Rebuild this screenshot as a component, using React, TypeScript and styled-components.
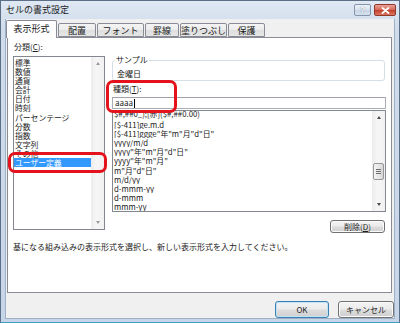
import React from 'react';
import styled, { createGlobalStyle } from 'styled-components';

const GlobalStyle = createGlobalStyle`
  html, body {
    margin: 0;
    padding: 0;
    background: #ffffff;
  }
  body {
    font-family: "Noto Sans CJK JP", "Noto Sans", sans-serif;
    color: #1a1a1a;
  }
  * {
    box-sizing: border-box;
  }
`;

const Window = styled.div`
  width: 400px;
  height: 323px;
  display: flex;
  flex-direction: column;
  background: linear-gradient(180deg, #dfe8f3 0px, #cfdcec 30px, #c6d5e8 100%);
  border: 1px solid #5d6f86;
  border-bottom-color: #3d9cc0;
`;

const TitleBar = styled.div`
  height: 18px;
  flex: none;
  display: flex;
  align-items: center;
  justify-content: space-between;
  padding: 0 3px 0 5px;
`;

const Title = styled.span`
  font-size: 9px;
  line-height: 12px;
  color: #1c1c1c;
`;

const Controls = styled.div`
  align-self: flex-start;
  margin-top: 3px;
  display: flex;
  gap: 3px;
`;

const CaptionButton = styled.div<{ $close?: boolean }>`
  width: ${(p) => (p.$close ? 22 : 17)}px;
  height: 12px;
  border-radius: 2px;
  display: flex;
  align-items: center;
  justify-content: center;
  border: 1px solid ${(p) => (p.$close ? '#92362b' : '#8495ab')};
  background: ${(p) =>
    p.$close
      ? 'linear-gradient(180deg, #eaa497 0%, #d86b5c 45%, #c4422f 55%, #d9785f 100%)'
      : 'linear-gradient(180deg, #eef3f9 0%, #d9e3ef 45%, #c9d6e6 55%, #d6e1ee 100%)'};
  color: #ffffff;
  font-family: "Liberation Sans", sans-serif;
  font-weight: bold;
  font-size: 9px;
  line-height: 10px;
  text-shadow: 0 0 1px #4b5a70;
`;

const Client = styled.div`
  flex: 1;
  margin: 0 4px 3px;
  background: #f0f0f0;
  border-left: 1px solid #9fb0c6;
  border-right: 1px solid #9fb0c6;
  border-bottom: 1px solid #9fb0c6;
  display: flex;
  flex-direction: column;
`;

const TabRow = styled.div`
  height: 18px;
  flex: none;
  display: flex;
  align-items: flex-end;
  position: relative;
  z-index: 2;
`;

const Tab = styled.div<{ $active?: boolean; $w: number }>`
  width: ${(p) => p.$w}px;
  height: ${(p) => (p.$active ? 18 : 14)}px;
  margin-left: ${(p) => (p.$active ? 0 : 1)}px;
  margin-bottom: ${(p) => (p.$active ? -1 : 0)}px;
  border: 1px solid #898c95;
  border-bottom: ${(p) => (p.$active ? 'none' : '1px solid #898c95')};
  border-radius: 2px 2px 0 0;
  background: ${(p) =>
    p.$active ? '#ffffff' : 'linear-gradient(180deg, #f4f4f4 0%, #ececec 50%, #dedede 51%, #e6e6e6 100%)'};
  display: flex;
  align-items: center;
  justify-content: center;
  font-size: 9px;
  line-height: 11px;
  white-space: nowrap;
  color: #1a1a1a;
  padding-bottom: ${(p) => (p.$active ? 2 : 0)}px;
`;

const Panel = styled.div`
  position: relative;
  height: 256px;
  flex: none;
  margin: 0 2px 0 1px;
  border: 1px solid #898c95;
  background: #ffffff;
  padding: 4px 5px 0;
  display: flex;
  flex-direction: column;
`;

const TopRow = styled.div`
  display: flex;
  gap: 7px;
`;

const LeftColumn = styled.div`
  width: 92px;
  display: flex;
  flex-direction: column;
  gap: 4px;
`;

const RightColumn = styled.div`
  flex: 1;
  padding-top: 13px;
  display: flex;
  flex-direction: column;
`;

const Label = styled.div`
  font-size: 8px;
  line-height: 10px;
  height: 10px;
  padding-left: 1px;
  white-space: nowrap;
  u {
    text-decoration: underline;
  }
`;

const ListBox = styled.div<{ $h: number }>`
  height: ${(p) => p.$h}px;
  flex: none;
  border: 1px solid #828790;
  background: #ffffff;
  display: flex;
  overflow: hidden;
`;

const Items = styled.div<{ $top: number }>`
  flex: 1;
  min-width: 0;
  padding-top: ${(p) => p.$top}px;
  overflow: hidden;
`;

const Item = styled.div<{ $selected?: boolean; $partial?: boolean }>`
  height: 9.1px;
  line-height: ${(p) => (p.$partial ? 6 : 9.1)}px;
  font-size: 7.8px;
  padding-left: 1px;
  white-space: nowrap;
  overflow: hidden;
  color: ${(p) => (p.$selected ? '#ffffff' : '#1a1a1a')};
  background: ${(p) => (p.$selected ? '#3399ff' : 'transparent')};
`;

const ScrollBar = styled.div`
  width: 13px;
  flex: none;
  background: linear-gradient(90deg, #ececec 0%, #f6f6f6 40%, #f1f1f1 100%);
  display: flex;
  flex-direction: column;
  align-items: center;
`;

const ArrowBox = styled.div`
  height: 13px;
  width: 100%;
  flex: none;
  display: flex;
  align-items: center;
  justify-content: center;
`;

const Arrow = styled.div<{ $down?: boolean; $dim?: boolean }>`
  width: 0;
  height: 0;
  border-left: 2.5px solid transparent;
  border-right: 2.5px solid transparent;
  ${(p) => (p.$down ? 'border-top' : 'border-bottom')}: 3px solid ${(p) => (p.$dim ? '#9a9a9a' : '#4a4a4a')};
`;

const Track = styled.div<{ $offset: number }>`
  flex: 1;
  width: 100%;
  padding: ${(p) => p.$offset}px 1px 0;
`;

const Thumb = styled.div`
  height: 17px;
  border: 1px solid #979797;
  border-radius: 2px;
  background: linear-gradient(90deg, #f3f3f3 0%, #e8e8e8 50%, #d6d6d6 100%);
  display: flex;
  flex-direction: column;
  align-items: center;
  justify-content: center;
  gap: 1px;
`;

const Grip = styled.div`
  width: 5px;
  height: 1px;
  background: #6f6f6f;
`;

const SampleBox = styled.fieldset`
  margin: 0 1px 0 0;
  padding: 4px 4px 1px;
  border: 1px solid #d5dfe5;
  border-radius: 3px;
  min-width: 0;
`;

const Legend = styled.legend`
  font-size: 8px;
  line-height: 10px;
  padding: 0 1px;
  margin-left: -2px;
`;

const SampleText = styled.div`
  font-size: 8px;
  line-height: 10px;
  height: 10px;
`;

const TypeLabel = styled(Label)`
  margin-top: 3px;
`;

const TextBox = styled.div`
  margin-top: 3px;
  height: 12px;
  border: 1px solid #abadb3;
  border-top-color: #9fa2aa;
  background: #ffffff;
  padding-left: 2px;
  font-size: 8px;
  line-height: 10px;
  display: flex;
  align-items: center;
`;

const Caret = styled.span`
  display: inline-block;
  width: 1px;
  height: 9px;
  background: #000000;
  margin-left: 1px;
`;

const FormatList = styled(ListBox)`
  margin-top: 1px;
`;

const Button = styled.div<{ $w: number; $h: number; $default?: boolean }>`
  width: ${(p) => p.$w}px;
  height: ${(p) => p.$h}px;
  flex: none;
  border: 1px solid ${(p) => (p.$default ? '#3c7fb1' : '#707070')};
  border-radius: 3px;
  background: linear-gradient(180deg, #f3f3f3 0%, #ebebeb 48%, #dddddd 52%, #cfcfcf 100%);
  box-shadow: ${(p) => (p.$default ? 'inset 0 0 0 1px #bfe3f8' : 'inset 0 0 0 1px #fbfbfb')};
  display: flex;
  align-items: center;
  justify-content: center;
  font-size: 8px;
  line-height: 10px;
  color: #1f1f1f;
  u {
    text-decoration: underline;
  }
`;

const DeleteButton = styled(Button)`
  margin-top: 8px;
  align-self: flex-end;
  margin-right: 1px;
`;

const Description = styled.div`
  margin-top: 9px;
  font-size: 8px;
  line-height: 10px;
  white-space: nowrap;
`;

const ButtonRow = styled.div`
  margin-top: 8px;
  display: flex;
  justify-content: flex-end;
  gap: 9px;
`;

const Mark = styled.div<{ $x: number; $y: number; $w: number; $h: number }>`
  position: absolute;
  left: ${(p) => p.$x}px;
  top: ${(p) => p.$y}px;
  width: ${(p) => p.$w}px;
  height: ${(p) => p.$h}px;
  border: 3px solid #e3121c;
  border-radius: 7px;
  pointer-events: none;
`;

const tabs = [
  { label: '表示形式', w: 51, active: true },
  { label: '配置', w: 38 },
  { label: 'フォント', w: 47 },
  { label: '罫線', w: 34 },
  { label: '塗りつぶし', w: 47 },
  { label: '保護', w: 37 },
];

const categories = [
  '標準',
  '数値',
  '通貨',
  '会計',
  '日付',
  '時刻',
  'パーセンテージ',
  '分数',
  '指数',
  '文字列',
  'その他',
  'ユーザー定義',
];

const formats = [
  '$#,##0_);[赤]($#,##0.00)',
  '[$-411]ge.m.d',
  '[$-411]ggge"年"m"月"d"日"',
  'yyyy/m/d',
  'yyyy"年"m"月"d"日"',
  'yyyy"年"m"月"',
  'm"月"d"日"',
  'm/d/yy',
  'd-mmm-yy',
  'd-mmm',
  'mmm-yy',
];

function Scroll({ dim, thumbOffset }: { dim?: boolean; thumbOffset?: number }) {
  return (
    <ScrollBar>
      <ArrowBox>
        <Arrow $dim={dim} />
      </ArrowBox>
      <Track $offset={thumbOffset ?? 0}>
        {thumbOffset !== undefined && (
          <Thumb>
            <Grip />
            <Grip />
            <Grip />
          </Thumb>
        )}
      </Track>
      <ArrowBox>
        <Arrow $down $dim={dim} />
      </ArrowBox>
    </ScrollBar>
  );
}

export default function App() {
  return (
    <>
      <GlobalStyle />
      <Window>
        <TitleBar>
          <Title>セルの書式設定</Title>
          <Controls>
            <CaptionButton>?</CaptionButton>
            <CaptionButton $close>
              <svg width="9" height="7" viewBox="0 0 9 7">
                <path d="M1.5 1 L7.5 6 M7.5 1 L1.5 6" stroke="#ffffff" strokeWidth="1.8" strokeLinecap="round" />
              </svg>
            </CaptionButton>
          </Controls>
        </TitleBar>
        <Client>
          <TabRow>
            {tabs.map((t) => (
              <Tab key={t.label} $w={t.w} $active={t.active}>
                {t.label}
              </Tab>
            ))}
          </TabRow>
          <Panel>
            <TopRow>
              <LeftColumn>
                <Label>
                  分類(<u>C</u>):
                </Label>
                <ListBox $h={174}>
                  <Items $top={1}>
                    {categories.map((c) => (
                      <Item key={c} $selected={c === 'ユーザー定義'}>
                        {c}
                      </Item>
                    ))}
                  </Items>
                  <Scroll dim />
                </ListBox>
              </LeftColumn>
              <RightColumn>
                <SampleBox>
                  <Legend>サンプル</Legend>
                  <SampleText>金曜日</SampleText>
                </SampleBox>
                <TypeLabel>
                  種類(<u>T</u>):
                </TypeLabel>
                <TextBox>
                  aaaa
                  <Caret />
                </TextBox>
                <FormatList $h={102}>
                  <Items $top={0}>
                    {formats.map((f, i) => (
                      <Item key={f} $partial={i === 0}>
                        {f}
                      </Item>
                    ))}
                  </Items>
                  <Scroll thumbOffset={39} />
                </FormatList>
                <DeleteButton $w={55} $h={13}>
                  削除(<u>D</u>)
                </DeleteButton>
              </RightColumn>
            </TopRow>
            <Description>
              基になる組み込みの表示形式を選択し、新しい表示形式を入力してください。
            </Description>
            <Mark $x={0} $y={114} $w={99} $h={21} />
            <Mark $x={98} $y={42} $w={71} $h={33} />
          </Panel>
          <ButtonRow>
            <Button $w={54} $h={17} $default>
              OK
            </Button>
            <Button $w={56} $h={17}>
              キャンセル
            </Button>
          </ButtonRow>
        </Client>
      </Window>
    </>
  );
}
